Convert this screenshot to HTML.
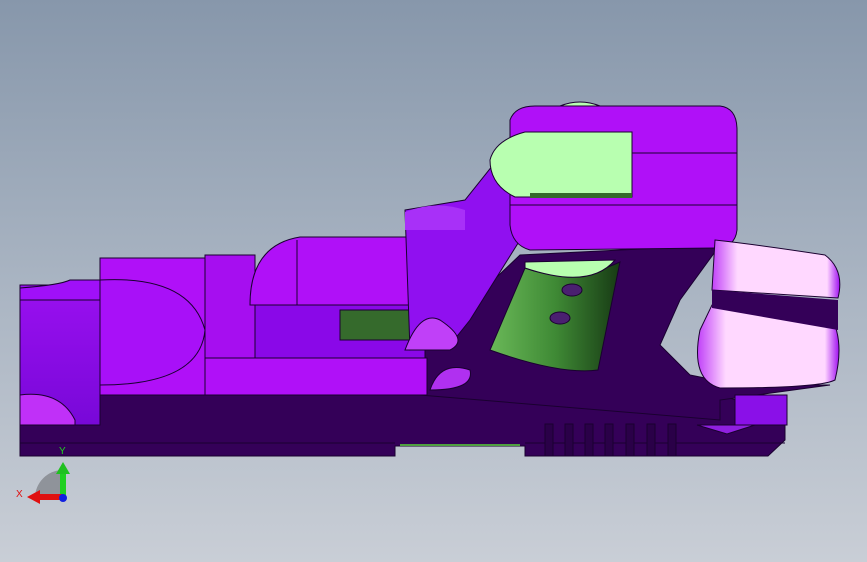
<!DOCTYPE html>
<html><head><style>
html,body{margin:0;padding:0;width:867px;height:562px;overflow:hidden;}
body{background:linear-gradient(#8797ab 0%,#a9b4c2 50%,#c9ced6 100%);}
svg{position:absolute;left:0;top:0}
</style></head><body>
<svg width="867" height="562" viewBox="0 0 867 562" font-family="Liberation Sans, sans-serif">
<defs>
<linearGradient id="pu" x1="0" y1="0" x2="0" y2="1"><stop offset="0" stop-color="#9a10f0"/><stop offset="1" stop-color="#7808d8"/></linearGradient>
<linearGradient id="cyl" x1="0" y1="0" x2="1" y2="0"><stop offset="0" stop-color="#6ab858"/><stop offset="0.5" stop-color="#3f8a35"/><stop offset="1" stop-color="#173a14"/></linearGradient>
<linearGradient id="pk" x1="0" y1="0" x2="1" y2="0"><stop offset="0" stop-color="#c040f8"/><stop offset="0.2" stop-color="#ffd8ff"/><stop offset="0.9" stop-color="#ffd8ff"/><stop offset="1" stop-color="#a010f0"/></linearGradient>
</defs>
<g stroke="#1a0030" stroke-width="1">
<polygon points="20,425 100,425 100,395 720,395 785,415 785,440 768,456 525,456 525,446 395,446 395,456 20,456" fill="#340058"/>
<line x1="20" y1="443" x2="395" y2="443"/><line x1="525" y1="443" x2="785" y2="443"/>
<line x1="400" y1="445" x2="520" y2="445" stroke="#50a040" stroke-width="2"/>
<g fill="#2a0048"><rect x="545" y="424" width="8" height="32"/><rect x="565" y="424" width="8" height="32"/><rect x="585" y="424" width="8" height="32"/><rect x="605" y="424" width="8" height="32"/><rect x="626" y="424" width="8" height="32"/><rect x="647" y="424" width="8" height="32"/><rect x="668" y="424" width="8" height="32"/></g>
<polygon points="697,425 755,425 727,434" fill="#9020e0"/>
<polygon points="420,395 420,350 520,255 720,245 680,300 660,345 690,375 740,385 830,385 720,400 720,420" fill="#340058"/>
<rect x="735" y="395" width="52" height="30" fill="#8a10e8"/>
<rect x="20" y="285" width="80" height="140" fill="url(#pu)"/>
<path d="M20,288 Q60,285 70,280 L100,280 L100,300 L20,300Z" fill="#a010f8"/>
<path d="M20,425 L20,395 Q60,390 75,420 L75,425Z" fill="#c030f8"/>
<rect x="100" y="258" width="105" height="137" fill="#b010f8"/>
<path d="M100,280 Q190,275 205,330 Q200,385 100,385Z" fill="#a810f8"/>
<rect x="205" y="255" width="50" height="140" fill="#a60ef0"/>
<path d="M250,305 Q250,245 300,237 L425,237 L425,305Z" fill="#b010f8"/>
<line x1="297" y1="240" x2="297" y2="305"/>
<rect x="255" y="305" width="170" height="55" fill="#8a08e8"/>
<rect x="340" y="310" width="75" height="30" fill="#356a2c"/>
<rect x="205" y="358" width="222" height="37" fill="#b010f8"/>
<path d="M430,390 Q440,360 470,370 Q475,390 430,390Z" fill="#b030f0"/>
<polygon points="405,210 465,200 505,150 520,170 520,240 470,320 450,345 410,350" fill="#9010f0"/>
<path d="M405,212 Q435,200 465,210 L465,230 L405,230Z" fill="#a830f8" stroke="none"/>
<path d="M405,350 Q420,310 440,320 Q470,340 450,350Z" fill="#c040f8"/>
<path d="M510,120 Q515,106 535,106 L720,106 Q737,108 737,130 L737,230 Q735,248 715,248 L530,250 Q512,245 510,225Z" fill="#b010f8"/>
<line x1="510" y1="153" x2="737" y2="153"/><line x1="510" y1="205" x2="737" y2="205"/>
<path d="M525,132 L632,132 L632,197 L515,197 Q490,185 490,160 Q495,140 525,132Z" fill="#b8ffb0"/>
<rect x="530" y="193" width="102" height="5" fill="#356a2c" stroke="none"/>
<path d="M560,106 Q580,98 600,106Z" fill="#b8ffb0"/>
<path d="M525,268 Q570,285 620,262 L598,370 Q560,375 490,350Z" fill="url(#cyl)"/>
<path d="M525,262 L615,260 Q590,290 525,268Z" fill="#b8ffb0"/>
<ellipse cx="572" cy="290" rx="10" ry="6" fill="#4a2070"/>
<ellipse cx="560" cy="318" rx="10" ry="6" fill="#4a2070"/>
<path d="M715,240 Q760,245 825,255 Q845,270 838,298 L712,290Z" fill="url(#pk)"/>
<path d="M712,305 L830,315 Q845,340 835,380 Q820,388 720,388 Q690,380 700,330Z" fill="url(#pk)"/>
<path d="M712,290 L838,300 L838,330 L712,308Z" fill="#340058" stroke="none"/>
</g>
<path d="M63,498 L35,498 A28,28 0 0 1 63,470Z" fill="#8f939a"/>
<rect x="60" y="472" width="6" height="26" fill="#20d020"/>
<polygon points="56,474 63,462 70,474" fill="#20c020"/>
<rect x="38" y="494" width="25" height="6" fill="#e01010"/>
<polygon points="40,490 27,497 40,504" fill="#e01010"/>
<circle cx="63" cy="498" r="4" fill="#1020e0"/>
<text x="16" y="497" font-size="10" fill="#e01010">X</text>
<text x="59" y="454" font-size="10" fill="#20d020">Y</text>
</svg>
</body></html>
